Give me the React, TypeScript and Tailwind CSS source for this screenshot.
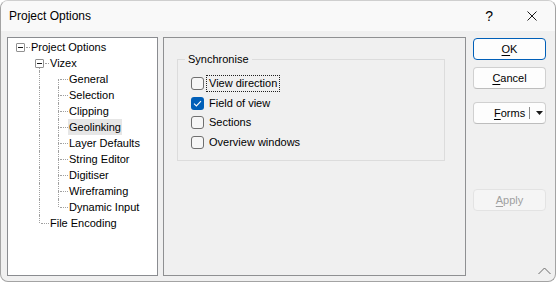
import React from "react";

type Row = {
  label: string;
  depth: number;
  expander?: boolean;
  first?: boolean;
  hasNext?: boolean;
  guides: boolean[];
  selected?: boolean;
};

const rows: Row[] = [
  { label: "Project Options", depth: 0, expander: true, first: true, guides: [] },
  { label: "Vizex", depth: 1, expander: true, first: true, hasNext: true, guides: [false] },
  { label: "General", depth: 2, first: true, hasNext: true, guides: [false, true] },
  { label: "Selection", depth: 2, hasNext: true, guides: [false, true] },
  { label: "Clipping", depth: 2, hasNext: true, guides: [false, true] },
  { label: "Geolinking", depth: 2, hasNext: true, guides: [false, true], selected: true },
  { label: "Layer Defaults", depth: 2, hasNext: true, guides: [false, true] },
  { label: "String Editor", depth: 2, hasNext: true, guides: [false, true] },
  { label: "Digitiser", depth: 2, hasNext: true, guides: [false, true] },
  { label: "Wireframing", depth: 2, hasNext: true, guides: [false, true] },
  { label: "Dynamic Input", depth: 2, guides: [false, true] },
  { label: "File Encoding", depth: 1, guides: [false] },
];

function TreeRow({ r }: { r: Row }) {
  return (
    <div className="flex h-[16px] items-stretch">
      {r.guides.map((g, i) => (
        <span key={i} className="relative w-[19px] shrink-0">
          {g && (
            <span className="absolute left-[9px] top-0 h-[16px] border-l border-dotted border-[#a0a0a0]" />
          )}
        </span>
      ))}
      <span className="relative w-[19px] shrink-0">
        {!r.first && r.depth > 0 && (
          <span className="absolute left-[9px] top-0 h-[8px] border-l border-dotted border-[#a0a0a0]" />
        )}
        {r.hasNext && (
          <span className="absolute left-[9px] top-[8px] h-[8px] border-l border-dotted border-[#a0a0a0]" />
        )}
        {r.expander ? (
          <>
            <span className="absolute left-[15px] top-[8px] w-[4px] border-t border-dotted border-[#a0a0a0]" />
            <span className="absolute left-[5px] top-[4px] flex h-[9px] w-[9px] items-center justify-center rounded-[1px] border border-[#919191] bg-white">
              <span className="h-px w-[5px] bg-[#1a1a1a]" />
            </span>
          </>
        ) : (
          <span className="absolute left-[11px] top-[8px] w-[8px] border-t border-dotted border-[#a0a0a0]" />
        )}
      </span>
      <span
        className={
          "h-[16px] whitespace-nowrap px-[1px] leading-[16px] " +
          (r.selected ? "bg-[#e6e6e6]" : "")
        }
      >
        {r.label}
      </span>
    </div>
  );
}

function CheckRow({
  label,
  checked,
  focused,
}: {
  label: string;
  checked?: boolean;
  focused?: boolean;
}) {
  return (
    <div className="flex h-[19.5px] items-center">
      {checked ? (
        <span className="flex h-[13px] w-[13px] items-center justify-center rounded-[3px] bg-[#005fb8]">
          <svg width="9" height="7" viewBox="0 0 9 7" fill="none">
            <path d="M1 3.6 L3.4 6 L8 1.2" stroke="white" strokeWidth="1.1" />
          </svg>
        </span>
      ) : (
        <span className="h-[13px] w-[13px] rounded-[3px] border border-[#6f6f6f] bg-[#f6f6f6]" />
      )}
      <span
        className={
          "ml-[2px] h-[17px] whitespace-nowrap border px-[2px] leading-[15px] " +
          (focused ? "border-dotted border-[#202020]" : "border-transparent")
        }
      >
        {label}
      </span>
    </div>
  );
}

function Btn({
  children,
  variant = "normal",
  className = "",
}: {
  children: React.ReactNode;
  variant?: "default" | "normal" | "disabled";
  className?: string;
}) {
  const v =
    variant === "default"
      ? "border-[#005fb8] bg-[#fdfdfd] text-black"
      : variant === "disabled"
      ? "border-[#e3e3e3] bg-[#f5f5f5] text-[#a0a0a0]"
      : "border-[#d0d0d0] border-b-[#bdbdbd] bg-[#fdfdfd] text-black";
  return (
    <div
      className={
        "flex h-[22px] w-[73px] items-center justify-center rounded-[4px] border " +
        v +
        " " +
        className
      }
    >
      {children}
    </div>
  );
}

export default function App() {
  return (
    <div
      className="relative h-[282px] w-[556px] overflow-hidden rounded-[8px] border border-[#a3a3a3] border-t-[#cfcfcf] bg-[#f0f0f0] text-[11px] text-black"
      style={{ fontFamily: "'Liberation Sans', Arial, sans-serif" }}
    >
      {/* Title bar */}
      <div className="flex h-[30px] items-center bg-[#f9f9f9]">
        <span className="ml-[8px] text-[12px] leading-none">Project Options</span>
        <span className="ml-auto mr-[34px] text-[14px] leading-none">?</span>
        <svg width="10" height="10" viewBox="0 0 10 10" className="mr-[18px]">
          <path d="M0.5 0.5 L9.5 9.5 M9.5 0.5 L0.5 9.5" stroke="#1a1a1a" strokeWidth="1" />
        </svg>
      </div>

      {/* Body */}
      <div className="flex pl-[6px] pt-[6px]">
        {/* Tree */}
        <div className="h-[239px] w-[151px] shrink-0 border border-[#8a8c90] bg-white pl-[3px] pt-[1px]">
          {rows.map((r) => (
            <TreeRow key={r.label} r={r} />
          ))}
        </div>

        {/* Right panel */}
        <div className="ml-[5px] h-[239px] w-[303px] shrink-0 border border-[#8f9092] bg-[#f0f0f0] pl-[13px] pt-[13px]">
          <fieldset className="h-[110px] w-[268px] border border-[#dcdcdc] p-0">
            <legend className="ml-[7px] px-[3px] leading-[16px]">Synchronise</legend>
            <div className="mt-[7px] pl-[13px]">
              <CheckRow label="View direction" focused />
              <CheckRow label="Field of view" checked />
              <CheckRow label="Sections" />
              <CheckRow label="Overview windows" />
            </div>
          </fieldset>
        </div>

        {/* Buttons */}
        <div className="ml-[7px] flex flex-col pt-[1px]">
          <Btn variant="default">
            <span>
              <span className="underline underline-offset-2">O</span>K
            </span>
          </Btn>
          <Btn className="mt-[7px]">
            <span>
              <span className="underline underline-offset-2">C</span>ancel
            </span>
          </Btn>
          <Btn className="mt-[13px] !justify-start">
            <span className="ml-[20px] w-[35px]">
              <span className="underline underline-offset-2">F</span>orms
            </span>
            <span className="h-[12px] w-px bg-[#8a8a8a]" />
            <svg width="7" height="4" viewBox="0 0 7 4" className="ml-[6px]">
              <path d="M0 0 L7 0 L3.5 4 Z" fill="#1a1a1a" />
            </svg>
          </Btn>
          <Btn variant="disabled" className="mt-[65px]">
            <span>
              <span className="underline underline-offset-2">A</span>pply
            </span>
          </Btn>
        </div>
      </div>

      {/* Resize grip */}
      <svg
        width="13"
        height="8"
        viewBox="0 0 13 8"
        className="absolute bottom-[6px] right-[4px]"
      >
        <path d="M0.5 7 L6.5 1 L12.5 7" stroke="#6a6a6a" strokeWidth="1" fill="none" />
      </svg>
    </div>
  );
}
